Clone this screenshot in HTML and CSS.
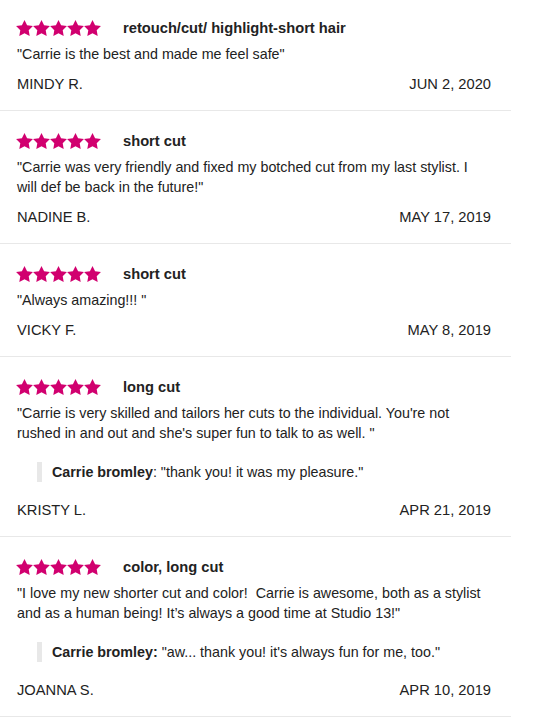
FILE: index.html
```html
<!DOCTYPE html>
<html>
<head>
<meta charset="utf-8">
<link rel="stylesheet" href="styles.css">
</head>
<body>
<svg width="0" height="0" class="defs">
  <defs>
    <symbol id="star" viewBox="2 2 20 19.02">
      <path d="M12 2l3.09 6.26L22 9.27l-5 4.87 1.18 6.88L12 17.77l-6.18 3.25L7 14.14 2 9.27l6.91-1.01L12 2z"/>
    </symbol>
  </defs>
</svg>
<div class="list">
  <div class="review">
    <div class="head">
      <div class="stars"><svg><use href="#star"/></svg><svg><use href="#star"/></svg><svg><use href="#star"/></svg><svg><use href="#star"/></svg><svg><use href="#star"/></svg></div>
      <div class="title">retouch/cut/ highlight-short hair</div>
    </div>
    <p class="text">"Carrie is the best and made me feel safe"</p>
    <div class="meta"><span>MINDY R.</span><span>JUN 2, 2020</span></div>
  </div>
  <div class="review">
    <div class="head">
      <div class="stars"><svg><use href="#star"/></svg><svg><use href="#star"/></svg><svg><use href="#star"/></svg><svg><use href="#star"/></svg><svg><use href="#star"/></svg></div>
      <div class="title">short cut</div>
    </div>
    <p class="text">"Carrie was very friendly and fixed my botched cut from my last stylist. I will def be back in the future!"</p>
    <div class="meta"><span>NADINE B.</span><span>MAY 17, 2019</span></div>
  </div>
  <div class="review">
    <div class="head">
      <div class="stars"><svg><use href="#star"/></svg><svg><use href="#star"/></svg><svg><use href="#star"/></svg><svg><use href="#star"/></svg><svg><use href="#star"/></svg></div>
      <div class="title">short cut</div>
    </div>
    <p class="text">"Always amazing!!! "</p>
    <div class="meta"><span>VICKY F.</span><span>MAY 8, 2019</span></div>
  </div>
  <div class="review">
    <div class="head">
      <div class="stars"><svg><use href="#star"/></svg><svg><use href="#star"/></svg><svg><use href="#star"/></svg><svg><use href="#star"/></svg><svg><use href="#star"/></svg></div>
      <div class="title">long cut</div>
    </div>
    <p class="text">"Carrie is very skilled and tailors her cuts to the individual. You're not rushed in and out and she's super fun to talk to as well. "</p>
    <div class="reply"><b>Carrie bromley</b>: "thank you! it was my pleasure."</div>
    <div class="meta"><span>KRISTY L.</span><span>APR 21, 2019</span></div>
  </div>
  <div class="review">
    <div class="head">
      <div class="stars"><svg><use href="#star"/></svg><svg><use href="#star"/></svg><svg><use href="#star"/></svg><svg><use href="#star"/></svg><svg><use href="#star"/></svg></div>
      <div class="title">color, long cut</div>
    </div>
    <p class="text">"I love my new shorter cut and color!&nbsp; Carrie is awesome, both as a stylist and as a human being! It’s always a good time at Studio 13!"</p>
    <div class="reply"><b>Carrie bromley:</b> "aw... thank you! it's always fun for me, too."</div>
    <div class="meta"><span>JOANNA S.</span><span>APR 10, 2019</span></div>
  </div>
</div>
</body>
</html>
```
FILE: styles.css
```css
html, body {
  margin: 0;
  padding: 0;
  background: #ffffff;
}
body {
  font-family: "Liberation Sans", Arial, Helvetica, sans-serif;
  font-size: 14.3px;
  color: #222222;
}
.defs {
  position: absolute;
  width: 0;
  height: 0;
}
.list {
  width: 511px;
  margin-top: -2px;
}
.review {
  padding: 20px 20px 16px 16px;
  border-bottom: 1px solid #e8e8e8;
}
.head {
  display: flex;
  align-items: center;
  height: 20px;
}
.stars {
  display: flex;
  width: 107px;
}
.stars svg {
  width: 17px;
  height: 16px;
  fill: #d1006f;
}
.title {
  font-weight: bold;
  font-size: 14.7px;
}
.text {
  margin: 6px 0 0 1px;
  line-height: 20px;
}
.reply {
  margin: 19px 0 18px 21px;
  border-left: 5px solid #e8e8e8;
  padding-left: 10px;
  line-height: 20px;
}
.reply b {
  font-weight: bold;
}
.meta {
  margin: 10px 0 0 1px;
  display: flex;
  justify-content: space-between;
  line-height: 20px;
  font-size: 14.7px;
}
```
